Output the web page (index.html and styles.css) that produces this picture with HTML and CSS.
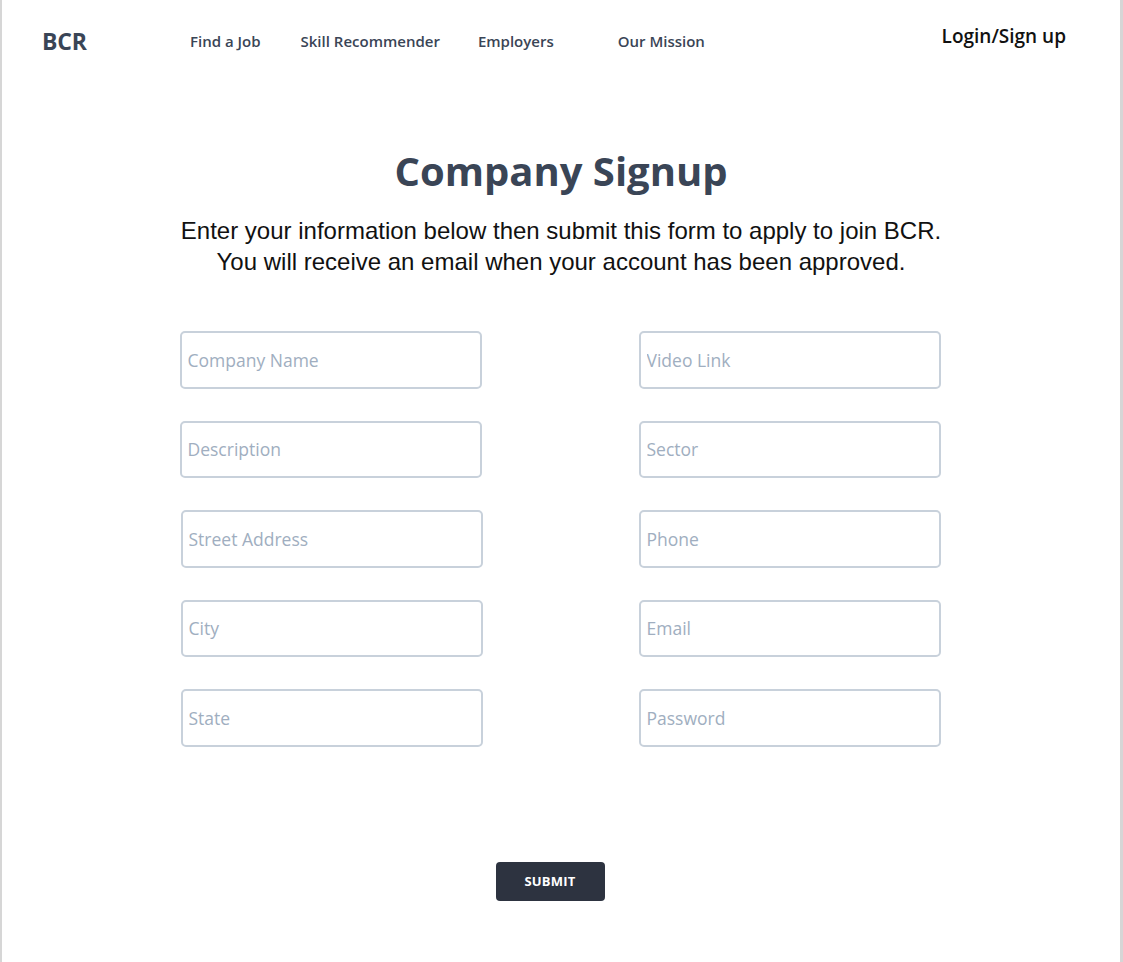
FILE: index.html
```html
<!DOCTYPE html>
<html lang="en">
<head>
<meta charset="utf-8">
<title>Company Signup</title>
<link rel="stylesheet" href="styles.css">
</head>
<body>
<div class="frame">
  <header class="topbar">
    <div class="brand">BCR</div>
    <nav class="links">
      <a class="link link-job" href="#">Find a Job</a>
      <a class="link link-skill" href="#">Skill Recommender</a>
      <a class="link link-emp" href="#">Employers</a>
      <a class="link link-mission" href="#">Our Mission</a>
    </nav>
    <a class="login" href="#">Login/Sign up</a>
  </header>

  <main class="content">
    <h1 class="title">Company Signup</h1>
    <p class="intro">Enter your information below then submit this form to apply to join BCR.<br>You will receive an email when your account has been approved.</p>

    <form class="form">
      <div class="grid">
        <input class="field" type="text" placeholder="Company Name">
        <input class="field" type="text" placeholder="Video Link">
        <input class="field" type="text" placeholder="Description">
        <input class="field" type="text" placeholder="Sector">
        <input class="field shift" type="text" placeholder="Street Address">
        <input class="field" type="text" placeholder="Phone">
        <input class="field shift" type="text" placeholder="City">
        <input class="field" type="email" placeholder="Email">
        <input class="field shift" type="text" placeholder="State">
        <input class="field" type="password" placeholder="Password">
      </div>
      <div class="actions">
        <button class="submit" type="button">Submit</button>
      </div>
    </form>
  </main>
</div>
</body>
</html>
```

FILE: styles.css
```css
* { box-sizing: border-box; }

html, body {
  margin: 0;
  padding: 0;
  background: #ffffff;
}

body {
  font-family: "Open Sans", "Liberation Sans", sans-serif;
  color: #2d3748;
}

.frame {
  min-height: 962px;
  border-left: 2px solid #d6d6d6;
  border-right: 3px solid #d6d6d6;
  background: #ffffff;
}

.topbar {
  display: flex;
  align-items: center;
  height: 82px;
  padding: 0 54px 0 40px;
}

.brand {
  font-size: 23px;
  font-weight: 700;
  color: #3a4556;
  width: 148px;
  letter-spacing: -0.2px;
}

.links {
  display: flex;
  align-items: center;
  flex: 1;
}

.link {
  font-size: 15px;
  font-weight: 600;
  color: #3a4556;
  text-decoration: none;
}

.link-job { margin-right: 40px; }
.link-skill { margin-right: 38px; }
.link-emp { margin-right: 64px; }

.login {
  font-size: 19px;
  font-weight: 600;
  color: #111111;
  text-decoration: none;
  margin-top: -11px;
}

.content {
  display: flex;
  flex-direction: column;
  align-items: center;
}

.title {
  margin: 62px 0 0;
  font-size: 40px;
  line-height: 54px;
  font-weight: 700;
  color: #3a4556;
}

.intro {
  margin: 17px 0 0;
  font-family: "Liberation Sans", Arial, sans-serif;
  font-size: 24px;
  line-height: 31px;
  text-align: center;
  color: #111111;
}

.form {
  width: 761px;
  margin-top: 54px;
  margin-right: 2px;
}

.grid {
  display: grid;
  grid-template-columns: 302px 302px;
  justify-content: space-between;
  row-gap: 32px;
}

.field {
  height: 57.5px;
  width: 302px;
  border: 2px solid #c8d1db;
  border-radius: 5px;
  padding: 0 6px;
  font-family: "Open Sans", sans-serif;
  font-size: 17.5px;
  color: #2d3748;
  background: #ffffff;
  outline: none;
}

.field::placeholder {
  color: #a0aec0;
  opacity: 1;
}

.shift { margin-left: 1px; }

.actions {
  display: flex;
  justify-content: center;
  margin-top: 115px;
  padding-right: 20px;
}

.submit {
  width: 109px;
  height: 39px;
  border: none;
  border-radius: 4px;
  background: #2d3340;
  color: #ffffff;
  font-family: "Open Sans", sans-serif;
  font-size: 13px;
  font-weight: 700;
  text-transform: uppercase;
  letter-spacing: 0.2px;
}
```
